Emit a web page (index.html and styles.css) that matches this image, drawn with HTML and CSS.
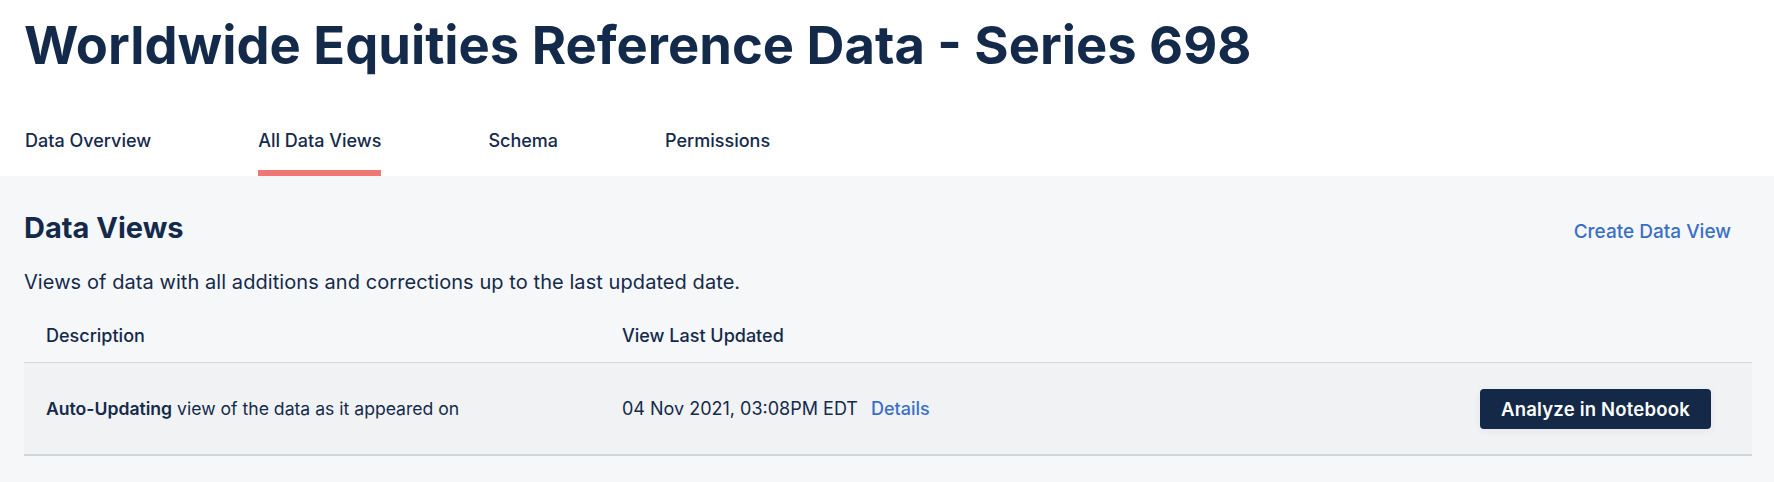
FILE: index.html
```html
<!DOCTYPE html>
<html lang="en">
<head>
<meta charset="utf-8">
<title>Worldwide Equities Reference Data - Series 698</title>
<link rel="stylesheet" href="styles.css">
</head>
<body>
<header class="page-header">
  <h1 class="page-title">Worldwide Equities Reference Data - Series 698</h1>
  <nav class="tabs">
    <a class="tab" href="#">Data Overview</a>
    <a class="tab tab-active" href="#">All Data Views</a>
    <a class="tab" href="#">Schema</a>
    <a class="tab" href="#">Permissions</a>
  </nav>
</header>
<main class="content">
  <div class="section-head">
    <h2 class="section-title">Data Views</h2>
    <a class="link link-create" href="#">Create Data View</a>
  </div>
  <p class="section-desc">Views of data with all additions and corrections up to the last updated date.</p>
  <div class="table">
    <div class="table-head">
      <div class="cell cell-desc">Description</div>
      <div class="cell cell-date">View Last Updated</div>
      <div class="cell cell-action"></div>
    </div>
    <div class="table-row">
      <div class="cell cell-desc"><strong>Auto-Updating</strong> view of the data as it appeared on</div>
      <div class="cell cell-date">04 Nov 2021, 03:08PM EDT <a class="link link-details" href="#">Details</a></div>
      <div class="cell cell-action"><button class="btn" type="button">Analyze in Notebook</button></div>
    </div>
  </div>
</main>
</body>
</html>
```
FILE: styles.css
```css
* { box-sizing: border-box; }
html, body { margin: 0; padding: 0; }
body {
  font-family: Inter, "Noto Sans", sans-serif;
  color: #142a4b;
  background: #f6f7f9;
  min-height: 482px;
}
a { text-decoration: none; }

.page-header {
  background: #ffffff;
  padding: 0 24px;
}
.page-title {
  margin: 0;
  padding-top: 14px;
  font-size: 52.5px;
  line-height: 62px;
  font-weight: 700;
  color: #142a4b;
}
.tabs {
  display: flex;
  gap: 107px;
  margin-top: 53px;
  padding-left: 1px;
}
.tab {
  display: block;
  font-size: 18px;
  line-height: 24px;
  font-weight: 500;
  color: #142a4b;
  padding-bottom: 17px;
  border-bottom: 6px solid transparent;
}
.tab-active { border-bottom-color: #f07874; }

.content {
  padding: 34px 22px 0 24px;
}
.section-head {
  display: flex;
  justify-content: space-between;
  align-items: baseline;
}
.section-title {
  margin: 0;
  font-size: 29px;
  line-height: 35px;
  font-weight: 700;
}
.link {
  color: #3a6fc8;
  font-weight: 500;
}
.link-create {
  font-size: 19px;
  margin-right: 21px;
}
.section-desc {
  margin: 23px 0 0;
  font-size: 20px;
  line-height: 28px;
  font-weight: 400;
  letter-spacing: 0.07px;
}
.table {
  margin-top: 28px;
}
.table-head, .table-row {
  display: grid;
  grid-template-columns: 576px 1fr auto;
  align-items: center;
}
.table-head {
  border-bottom: 1px solid #d3d8df;
  padding-bottom: 14px;
}
.table-row {
  height: 93px;
  background: #f1f2f4;
  border-bottom: 2px solid #cfd5dc;
}
.cell {
  padding-left: 22px;
  font-size: 18px;
  line-height: 24px;
}
.table-head .cell { font-weight: 500; }
.table-row .cell-desc { font-size: 17.6px; }
.table-row .cell { font-weight: 400; }
.table-row strong { font-weight: 600; }
.link-details {
  margin-left: 8px;
}
.cell-action { padding-right: 41px; }
.btn {
  width: 231px;
  height: 40px;
  padding: 0;
  border: none;
  border-radius: 4px;
  background: #132947;
  color: #ffffff;
  font-family: Inter, "Noto Sans", sans-serif;
  font-size: 18.5px;
  font-weight: 600;
  letter-spacing: 0.2px;
  box-shadow: 0 2px 8px rgba(20, 42, 75, 0.06);
  cursor: pointer;
}
```
